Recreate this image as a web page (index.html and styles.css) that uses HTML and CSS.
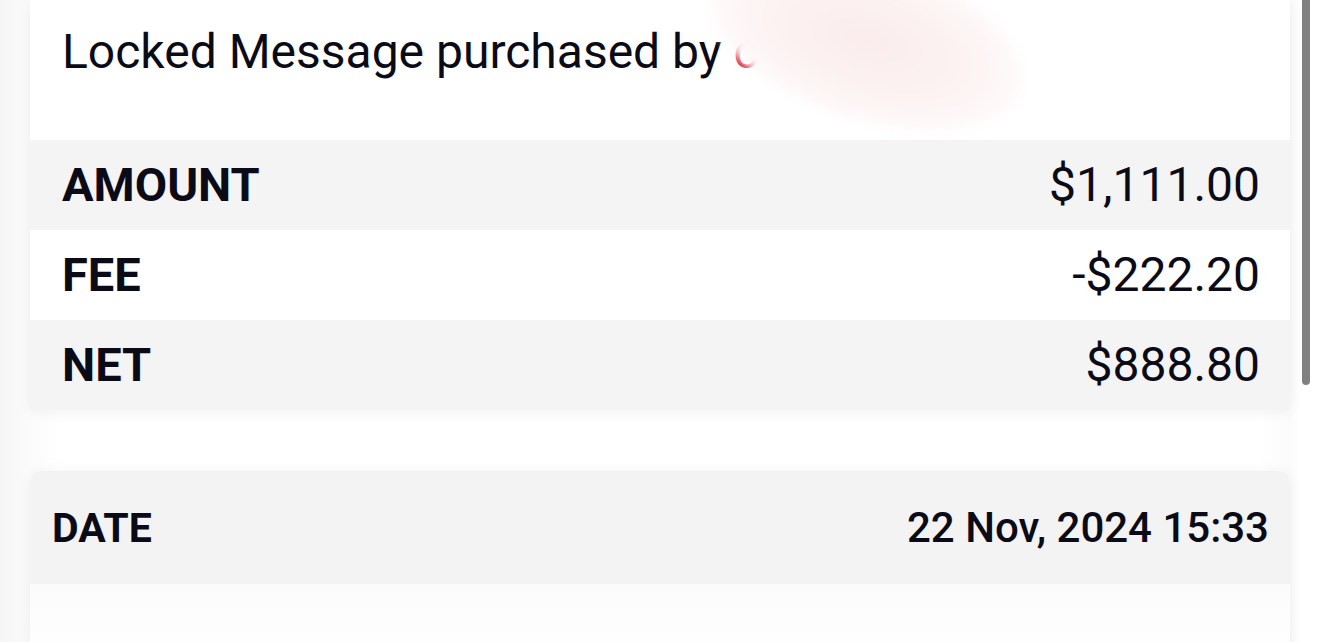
FILE: index.html
```html
<!DOCTYPE html>
<html lang="en">
<head>
<meta charset="utf-8">
<title>Transaction</title>
<link rel="stylesheet" href="styles.css">
</head>
<body>
<div class="page">
  <section class="card summary">
    <div class="title">
      <span class="title-text">Locked Message purchased by</span>
      <span class="buyer">c</span>
      <span class="redact"></span>
    </div>
    <div class="row shaded"><span class="label">AMOUNT</span><span class="value">$1,111.00</span></div>
    <div class="row"><span class="label">FEE</span><span class="value">-$222.20</span></div>
    <div class="row shaded"><span class="label">NET</span><span class="value">$888.80</span></div>
  </section>
  <section class="card details">
    <div class="detail-head"><span class="dlabel">DATE</span><span class="dvalue">22 Nov, 2024 15:33</span></div>
    <div class="detail-body"></div>
  </section>
</div>
<div class="scrollbar"></div>
</body>
</html>
```
FILE: styles.css
```css
* { box-sizing: border-box; }
html, body { margin: 0; padding: 0; }
body {
  width: 1320px;
  height: 642px;
  overflow: hidden;
  background: linear-gradient(90deg, #f6f6f7 0px, #fbfbfb 30px, #ffffff 60px, #ffffff 1260px, #fbfbfb 1290px, #ffffff 1300px);
  font-family: Roboto, "Liberation Sans", sans-serif;
  color: #0b0b18;
  position: relative;
}
.page {
  display: flex;
  flex-direction: column;
  gap: 61px;
  padding: 0 30px;
}
.card {
  width: 1260px;
  background: #ffffff;
  box-shadow: 0 2px 14px rgba(20, 20, 40, 0.06);
}
.summary {
  border-radius: 0 0 6px 6px;
}
.title {
  padding: 24px 32px 60px;
  font-size: 48px;
  line-height: 56px;
  font-weight: 400;
  position: relative;
  white-space: nowrap;
}
.buyer {
  color: #d3152b;
}
.redact {
  position: absolute;
  left: 672px;
  top: -42px;
  width: 330px;
  height: 164px;
  border-radius: 50%;
  background: radial-gradient(closest-side, #fbecec 0%, #fcf0f0 40%, #fdf4f4 70%, #fef8f8 88%, rgba(255, 252, 252, 0.8) 100%);
  filter: blur(4px);
  transform: rotate(18deg);
}
.row {
  height: 90px;
  display: flex;
  align-items: center;
  justify-content: space-between;
  padding: 0 30px 0 32px;
  font-size: 48px;
  line-height: 56px;
  background: #ffffff;
}
.row.shaded { background: #f4f4f5; }
.label {
  font-weight: 700;
  font-size: 47px;
}
.value { font-weight: 400; }
.details {
  border-radius: 12px 12px 0 0;
  overflow: hidden;
}
.detail-head {
  height: 113px;
  display: flex;
  align-items: center;
  justify-content: space-between;
  padding: 0 21px 0 22px;
  background: #f3f3f4;
  font-size: 42px;
  line-height: 50px;
  font-weight: 500;
}
.dlabel { font-weight: 700; font-size: 41px; }
.detail-body {
  height: 80px;
  background: linear-gradient(180deg, #fbfbfb, #ffffff);
}
.scrollbar {
  position: absolute;
  top: 0;
  left: 1302px;
  width: 8px;
  height: 385px;
  background: #808080;
  border-radius: 0 0 4px 4px;
}
```
